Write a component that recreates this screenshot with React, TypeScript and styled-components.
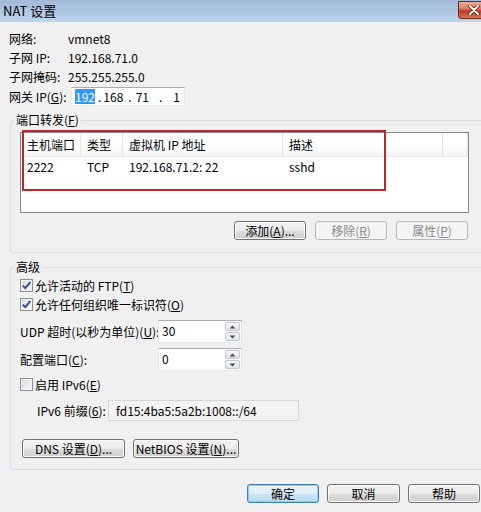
import React from "react";
import styled, { createGlobalStyle } from "styled-components";

const Global = createGlobalStyle`
  html, body { margin: 0; padding: 0; overflow: hidden; background: #f0f0f0; }
  body {
    font-family: "Noto Sans CJK SC", "Liberation Sans", sans-serif;
    font-size: 12px;
    color: #000;
  }
  * { box-sizing: border-box; }
  button { font-family: inherit; }
`;

const Window = styled.div`
  width: 500px;
  height: 512px;
  background: #f0f0f0;
  display: flex;
  flex-direction: column;
`;

const TitleBar = styled.div`
  height: 22px;
  flex: none;
  display: flex;
  align-items: flex-start;
  justify-content: space-between;
  background: linear-gradient(#a2b9d6, #bdd4ed);
`;

const Title = styled.span`
  padding-left: 3px;
  line-height: 22px;
  font-size: 13px;
`;

const CloseBtn = styled.div`
  width: 42px;
  height: 18px;
  margin-top: 1px;
  border: 1px solid #6a2d24;
  border-right: none;
  border-radius: 0 0 0 4px;
  background: linear-gradient(#eab0a0 0%, #d8745c 45%, #c23c20 55%, #d77256 100%);
  display: flex;
  align-items: center;
  padding-left: 9px;
`;

const InfoSection = styled.div`
  display: flex;
  flex-direction: column;
  padding: 7px 0 0 9px;
`;

const InfoRow = styled.div<{ $h: number }>`
  display: flex;
  align-items: center;
  height: ${(p) => p.$h}px;
  white-space: nowrap;
`;

const InfoLabel = styled.span<{ $w: number }>`
  width: ${(p) => p.$w}px;
  flex: none;
`;

const IpBox = styled.div`
  width: 114px;
  height: 19px;
  background: #fff;
  border: 1px solid #e3e9ef;
  border-top-color: #abadb3;
  display: flex;
  align-items: center;
`;

const IpPart = styled.span<{ $ml: number; $sel?: boolean }>`
  margin-left: ${(p) => p.$ml}px;
  line-height: 15px;
  background: ${(p) => (p.$sel ? "#3399ff" : "transparent")};
  color: ${(p) => (p.$sel ? "#fff" : "#000")};
`;

const Group = styled.fieldset<{ $mt: number }>`
  margin: ${(p) => p.$mt}px 10px 0;
  padding: 0;
  border: 1px solid #d5dfe5;
  border-radius: 3px;
  min-width: 0;
`;

const Legend = styled.legend`
  margin-left: 3px;
  padding: 0 2px;
  line-height: 14px;
  font-size: 12px;
`;

const GroupBody = styled.div<{ $pt: number; $pb: number }>`
  display: flex;
  flex-direction: column;
  align-items: flex-start;
  padding: ${(p) => p.$pt}px 0 ${(p) => p.$pb}px 9px;
`;

const ListBox = styled.div`
  position: relative;
  width: 449px;
  height: 81px;
  background: #fff;
  border: 1px solid #828790;
`;

const cols = "60px 42px 160px 160px 1fr";

const ListHeader = styled.div`
  display: grid;
  grid-template-columns: ${cols};
  height: 24px;
  border-bottom: 1px solid #e5e5e5;
  background: linear-gradient(#ffffff 0%, #ffffff 50%, #f4f5f7 100%);
`;

const HeaderCell = styled.div`
  display: flex;
  align-items: center;
  padding-left: 6px;
  border-right: 1px solid #e5e5e5;
  white-space: nowrap;
`;

const ListRow = styled.div`
  display: grid;
  grid-template-columns: ${cols};
  height: 19px;
  align-items: center;
`;

const RowCell = styled.div`
  padding-left: 6px;
  white-space: nowrap;
`;

const Annotation = styled.div`
  position: absolute;
  left: 1px;
  top: -3px;
  width: 364px;
  height: 61px;
  border: 2px solid #c1262d;
  pointer-events: none;
`;

const ButtonRow = styled.div<{ $mt: number; $gap: number; $end?: boolean; $pr?: number; $ml?: number }>`
  display: flex;
  gap: ${(p) => p.$gap}px;
  margin-top: ${(p) => p.$mt}px;
  margin-left: ${(p) => p.$ml ?? 0}px;
  justify-content: ${(p) => (p.$end ? "flex-end" : "flex-start")};
  padding-right: ${(p) => p.$pr ?? 0}px;
  width: ${(p) => (p.$end ? "100%" : "auto")};
`;

const Btn = styled.button<{ $w: number; $kind?: "normal" | "primary" | "disabled" }>`
  width: ${(p) => p.$w}px;
  height: 19px;
  padding: 0;
  font-size: 12px;
  line-height: 15px;
  border-radius: 3px;
  white-space: nowrap;
  color: ${(p) => (p.$kind === "disabled" ? "#8a8a8a" : "#000")};
  border: 1px solid
    ${(p) =>
      p.$kind === "primary" ? "#3c7fb1" : p.$kind === "disabled" ? "#b5b9bc" : "#707070"};
  background: ${(p) =>
    p.$kind === "primary"
      ? "linear-gradient(#eaf4fb 0%, #deedf8 50%, #cbe3f4 51%, #bcdcf1 100%)"
      : p.$kind === "disabled"
      ? "#f4f4f4"
      : "linear-gradient(#f2f2f2 0%, #ebebeb 50%, #dddddd 51%, #cfcfcf 100%)"};
  box-shadow: inset 0 0 0 1px
    ${(p) => (p.$kind === "primary" ? "#8fcdf0" : p.$kind === "disabled" ? "#f4f4f4" : "#fbfbfb")};
`;

const CheckRow = styled.div<{ $mt: number }>`
  display: flex;
  align-items: center;
  gap: 2px;
  height: 19px;
  margin-top: ${(p) => p.$mt}px;
  white-space: nowrap;
`;

const CheckBox = styled.span`
  width: 13px;
  height: 13px;
  flex: none;
  border: 1px solid #8e8f8f;
  background: linear-gradient(135deg, #d6d9de 0%, #f7f7f7 100%);
  box-shadow: inset 0 0 0 1px #f4f4f4;
  display: flex;
  align-items: center;
  justify-content: center;
`;

const FieldRow = styled.div<{ $mt: number }>`
  display: flex;
  align-items: center;
  margin-top: ${(p) => p.$mt}px;
  white-space: nowrap;
`;

const FieldLabel = styled.span<{ $w: number; $pl?: number }>`
  width: ${(p) => p.$w}px;
  padding-left: ${(p) => p.$pl ?? 0}px;
  flex: none;
`;

const SpinBox = styled.div<{ $h: number }>`
  width: 84px;
  height: ${(p) => p.$h}px;
  display: flex;
  background: #fff;
  border: 1px solid;
  border-color: #abadb3 #dbdfe6 #e3e9ef #e2e3ea;
`;

const SpinText = styled.span`
  flex: 1;
  padding: 2px 0 0 3px;
  line-height: 15px;
`;

const SpinColumn = styled.div`
  width: 15px;
  margin: 1px 1px 1px 0;
  display: flex;
  flex-direction: column;
  gap: 1px;
`;

const SpinBtn = styled.div`
  flex: 1;
  border: 1px solid #c3c7cd;
  border-radius: 2px;
  background: linear-gradient(#f6f6f6, #e2e4e7);
  display: flex;
  align-items: center;
  justify-content: center;
`;

const ReadonlyBox = styled.div`
  width: 191px;
  height: 21px;
  background: #f3f3f3;
  border: 1px solid #d6d6d6;
  padding-left: 7px;
  display: flex;
  align-items: center;
`;

const Spacer = styled.div`
  flex: 1;
`;

const Check = () => (
  <svg width="11" height="11" viewBox="0 0 11 11">
    <path d="M1.8 5.6 L4.3 8.2 L9.3 2.2" fill="none" stroke="#2f4d9c" strokeWidth="1.9" />
  </svg>
);

const Arrow = ({ up }: { up?: boolean }) => (
  <svg width="7" height="4" viewBox="0 0 7 4">
    <path d={up ? "M0.5 3.5 L3.5 0.5 L6.5 3.5 Z" : "M0.5 0.5 L3.5 3.5 L6.5 0.5 Z"} fill="#3d4d63" />
  </svg>
);

const Spin = ({ value, h }: { value: string; h: number }) => (
  <SpinBox $h={h}>
    <SpinText>{value}</SpinText>
    <SpinColumn>
      <SpinBtn>
        <Arrow up />
      </SpinBtn>
      <SpinBtn>
        <Arrow />
      </SpinBtn>
    </SpinColumn>
  </SpinBox>
);

const header = ["主机端口", "类型", "虚拟机 IP 地址", "描述", ""];
const rows = [["2222", "TCP", "192.168.71.2: 22", "sshd", ""]];

export default function App() {
  return (
    <>
      <Global />
      <Window>
        <TitleBar>
          <Title>NAT 设置</Title>
          <CloseBtn>
            <svg width="12" height="10" viewBox="0 0 12 10">
              <path d="M2 1 L10 9 M10 1 L2 9" stroke="#5a1d14" strokeWidth="3.6" strokeLinecap="round" />
              <path d="M2 1 L10 9 M10 1 L2 9" stroke="#ffffff" strokeWidth="2" strokeLinecap="round" />
            </svg>
          </CloseBtn>
        </TitleBar>

        <InfoSection>
          <InfoRow $h={19}>
            <InfoLabel $w={59}>网络:</InfoLabel>
            <span>vmnet8</span>
          </InfoRow>
          <InfoRow $h={19}>
            <InfoLabel $w={59}>子网 IP:</InfoLabel>
            <span>192.168.71.0</span>
          </InfoRow>
          <InfoRow $h={19}>
            <InfoLabel $w={59}>子网掩码:</InfoLabel>
            <span>255.255.255.0</span>
          </InfoRow>
          <InfoRow $h={21}>
            <InfoLabel $w={62}>
              网关 IP(<u>G</u>):
            </InfoLabel>
            <IpBox>
              <IpPart $ml={3} $sel>
                192
              </IpPart>
              <IpPart $ml={3}>.</IpPart>
              <IpPart $ml={2}>168</IpPart>
              <IpPart $ml={5}>.</IpPart>
              <IpPart $ml={4}>71</IpPart>
              <IpPart $ml={10}>.</IpPart>
              <IpPart $ml={11}>1</IpPart>
            </IpBox>
          </InfoRow>
        </InfoSection>

        <Group $mt={6}>
          <Legend>
            端口转发(<u>F</u>)
          </Legend>
          <GroupBody $pt={5} $pb={12}>
            <ListBox>
              <ListHeader>
                {header.map((h, i) => (
                  <HeaderCell key={i}>{h}</HeaderCell>
                ))}
              </ListHeader>
              {rows.map((r, i) => (
                <ListRow key={i}>
                  {r.map((c, j) => (
                    <RowCell key={j}>{c}</RowCell>
                  ))}
                </ListRow>
              ))}
              <Annotation />
            </ListBox>
            <ButtonRow $mt={8} $gap={9} $end $pr={21}>
              <Btn $w={72}>
                添加(<u>A</u>)...
              </Btn>
              <Btn $w={72} $kind="disabled">
                移除(<u>R</u>)
              </Btn>
              <Btn $w={72} $kind="disabled">
                属性(<u>P</u>)
              </Btn>
            </ButtonRow>
          </GroupBody>
        </Group>

        <Group $mt={7}>
          <Legend>高级</Legend>
          <GroupBody $pt={2} $pb={11}>
            <CheckRow $mt={0}>
              <CheckBox>
                <Check />
              </CheckBox>
              <span>
                允许活动的 FTP(<u>T</u>)
              </span>
            </CheckRow>
            <CheckRow $mt={0}>
              <CheckBox>
                <Check />
              </CheckBox>
              <span>
                允许任何组织唯一标识符(<u>O</u>)
              </span>
            </CheckRow>
            <FieldRow $mt={6}>
              <FieldLabel $w={138}>
                UDP 超时(以秒为单位)(<u>U</u>):
              </FieldLabel>
              <Spin value="30" h={23} />
            </FieldRow>
            <FieldRow $mt={5}>
              <FieldLabel $w={138}>
                配置端口(<u>C</u>):
              </FieldLabel>
              <Spin value="0" h={23} />
            </FieldRow>
            <CheckRow $mt={4}>
              <CheckBox />
              <span>
                启用 IPv6(<u>E</u>)
              </span>
            </CheckRow>
            <FieldRow $mt={6}>
              <FieldLabel $w={88} $pl={17}>
                IPv6 前缀(<u>6</u>):
              </FieldLabel>
              <ReadonlyBox>fd15:4ba5:5a2b:1008::/64</ReadonlyBox>
            </FieldRow>
            <ButtonRow $mt={18} $gap={8} $ml={2}>
              <Btn $w={103}>
                DNS 设置(<u>D</u>)...
              </Btn>
              <Btn $w={106}>
                NetBIOS 设置(<u>N</u>)...
              </Btn>
            </ButtonRow>
          </GroupBody>
        </Group>

        <ButtonRow $mt={14} $gap={8} $end $pr={20}>
          <Btn $w={72} $kind="primary">
            确定
          </Btn>
          <Btn $w={73}>取消</Btn>
          <Btn $w={72}>帮助</Btn>
        </ButtonRow>
        <Spacer />
      </Window>
    </>
  );
}
